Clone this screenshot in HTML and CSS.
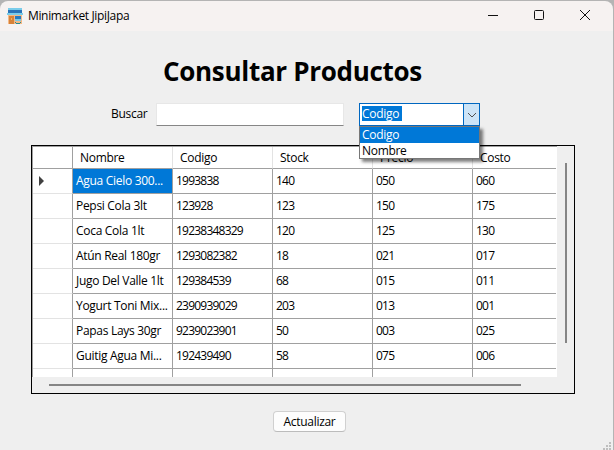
FILE: index.html
```html
<!DOCTYPE html>
<html lang="es">
<head>
<meta charset="utf-8">
<title>Minimarket JipiJapa</title>
<link rel="stylesheet" href="styles.css">
</head>
<body>
<div class="window">
  <header class="titlebar">
    <svg class="app-icon" width="16" height="16" viewBox="0 0 16 16" shape-rendering="crispEdges">
      <path fill="#f4b886" d="M1 6h14v10H1z"/>
      <path fill="#7accea" d="M1 0h14v3H1zM0 5h16v2H0z"/>
      <path fill="#2873b8" d="M1 2h14v3H1z"/>
      <path fill="#d78239" d="M2 8h5v8H2z"/>
      <path fill="#efb15e" d="M4 10h1v2H4z"/>
      <path fill="#267bc0" d="M8 8h6v3H8z"/>
      <path fill="#79c7e6" d="M8 11h6v2H8z"/>
      <path fill="#208c94" d="M8 14h1v1H8zM9 15h4v1H9zM13 14h1v1h-1z"/>
    </svg>
    <span class="caption">Minimarket JipiJapa</span>
    <div class="controls">
      <svg width="10" height="10" viewBox="0 0 10 10"><path d="M0 5.5h10"/></svg>
      <svg width="10" height="10" viewBox="0 0 10 10"><rect x=".5" y=".5" width="9" height="9" rx="1"/></svg>
      <svg width="10" height="10" viewBox="0 0 10 10"><path d="M0 0l10 10M10 0L0 10"/></svg>
    </div>
  </header>
  <main>
    <h1><span>Consultar Productos</span></h1>
    <div class="search">
      <label for="q">Buscar</label>
      <input id="q" type="text">
      <div class="combo">
        <div class="value"><span>Codigo</span></div>
        <div class="arrow"><svg width="10" height="6" viewBox="0 0 10 6"><path d="M1 1l4 4 4-4"/></svg></div>
        <ul class="menu">
          <li class="active">Codigo</li>
          <li>Nombre</li>
        </ul>
      </div>
    </div>
    <section class="panel">
      <div class="grid">
        <div class="row head"><b></b><span>Nombre</span><span>Codigo</span><span>Stock</span><span>Precio</span><span>Costo</span></div>
        <div class="row"><b><svg width="5" height="10" viewBox="0 0 5 10"><path d="M0 0l5 5-5 5z"/></svg></b><span class="selected">Agua Cielo 300...</span><i>1993838</i><i>140</i><i>050</i><i>060</i></div>
        <div class="row"><b></b><span>Pepsi Cola 3lt</span><i>123928</i><i>123</i><i>150</i><i>175</i></div>
        <div class="row"><b></b><span>Coca Cola 1lt</span><i>19238348329</i><i>120</i><i>125</i><i>130</i></div>
        <div class="row"><b></b><span>Atún Real 180gr</span><i>1293082382</i><i>18</i><i>021</i><i>017</i></div>
        <div class="row"><b></b><span>Jugo Del Valle 1lt</span><i>129384539</i><i>68</i><i>015</i><i>011</i></div>
        <div class="row"><b></b><span>Yogurt Toni Mix...</span><i>2390939029</i><i>203</i><i>013</i><i>001</i></div>
        <div class="row"><b></b><span>Papas Lays 30gr</span><i>9239023901</i><i>50</i><i>003</i><i>025</i></div>
        <div class="row"><b></b><span>Guitig Agua Mi...</span><i>192439490</i><i>58</i><i>075</i><i>006</i></div>
        <div class="row"><b></b><span></span><i></i><i></i><i></i><i></i></div>
      </div>
      <div class="vscroll"></div>
      <div class="hscroll"></div>
    </section>
    <button type="button">Actualizar</button>
  </main>
  <svg class="grip" width="8" height="8" viewBox="0 0 8 8"><path d="M6 0h2v2H6zM3 3h2v2H3zM6 3h2v2H6zM0 6h2v2H0zM3 6h2v2H3zM6 6h2v2H6z"/></svg>
</div>
</body>
</html>
```

FILE: styles.css
```css
* { box-sizing: border-box; }
body {
  margin: 0;
  width: 614px;
  height: 450px;
  overflow: hidden;
  background: #b4b4b4;
  font: 12px/16px "Open Sans", "Noto Sans", sans-serif;
  letter-spacing: -0.3px;
  color: #000;
}
.window {
  position: relative;
  width: 613px;
  height: 450px;
  padding-top: 1px;
}
.titlebar {
  display: flex;
  align-items: center;
  height: 30px;
  padding: 0 23px 0 7px;
  background: #f6f2f1;
  border-radius: 8px 8px 0 0;
}
.app-icon { margin-top: -1px; }
.caption { margin-left: 5px; letter-spacing: -0.35px; }
.controls { display: flex; gap: 36px; margin: -2px -5px 0 auto; padding-right: 5px; }
.controls svg { fill: none; stroke: #111; stroke-width: 1; }
main {
  display: flex;
  flex-direction: column;
  height: 419px;
  background: #efefef;
}
h1 {
  margin: 20px 0 0 163px;
  font-size: 26px;
  line-height: 40px;
  letter-spacing: -0.3px;
  white-space: nowrap;
}
.search { display: flex; height: 23px; margin: 12px 0 0 111px; }
label { width: 45px; line-height: 22px; }
input {
  width: 188px;
  height: 23px;
  padding: 2px 5px;
  border: 1px solid #e7e7e7;
  border-bottom-color: #868686;
  background: #fff;
}
.combo {
  position: relative;
  display: flex;
  width: 121px;
  height: 23px;
  margin-left: 15px;
  border: 1px solid #0067c0;
  background: #fff;
}
.value { flex: 1; padding: 2px; }
.value span {
  display: block;
  width: 40px;
  height: 15px;
  line-height: 16px;
  background: #0078d7;
  color: #fff;
}
.arrow {
  display: flex;
  align-items: center;
  justify-content: center;
  width: 16px;
  border-left: 1px solid #0067c0;
  background: #cce4f7;
}
.arrow svg { fill: none; stroke: #505050; }
.menu {
  position: absolute;
  z-index: 2;
  top: 22px;
  left: -1px;
  width: 121px;
  height: 33px;
  margin: 0;
  padding: 0;
  border: 1px solid #777;
  background: #fff;
  box-shadow: 3px 3px 3px rgba(0, 0, 0, .5);
  list-style: none;
}
.menu li { height: 15px; padding-left: 2px; line-height: 16px; }
.menu .active { height: 16px; background: #0078d7; color: #fff; }
.panel {
  display: grid;
  grid-template: 231px 1fr / 525px 1fr;
  width: 544px;
  height: 249px;
  margin: 19px 0 0 31px;
  border: 1px solid #000;
}
.grid {
  overflow: hidden;
  border-top: 1px solid #a0a0a0;
  border-left: 1px solid #a0a0a0;
  background: #fff;
}
.row {
  display: grid;
  grid-template-columns: 40px repeat(4, 100px) 83px;
  height: 25px;
  line-height: 24px;
  white-space: nowrap;
}
.row > * {
  padding-left: 3px;
  border-right: 1px solid #a0a0a0;
  border-bottom: 1px solid #a0a0a0;
  font-style: normal;
}
.row > :last-child { border-right: 0; }
.row b { display: flex; align-items: center; padding-left: 6px; border-bottom-color: #e3e3e3; }
.row i { letter-spacing: -0.78px; }
.head { height: 22px; line-height: 21px; }
.head > span { padding-left: 7px; border-right-color: #e3e3e3; }
.head b { border-bottom-color: #a0a0a0; }
.row .selected { background: #0078d7; color: #fff; }
.row svg { fill: #404040; }
.vscroll { justify-self: center; width: 2px; height: 180px; margin-top: 17px; background: #858585; }
.hscroll { width: 472px; height: 2px; margin: 7px 0 0 17px; background: #858585; }
button {
  width: 73px;
  height: 21px;
  margin: 17px 0 0 273px;
  padding: 0;
  border: 1px solid #d0d0d0;
  border-bottom-color: #bcbcbc;
  border-radius: 4px;
  background: #fdfdfd;
  color: #000;
  font: inherit;
  letter-spacing: -0.3px;
}
.grip { position: absolute; right: 2px; bottom: 0; fill: #bfbfbf; }
```
